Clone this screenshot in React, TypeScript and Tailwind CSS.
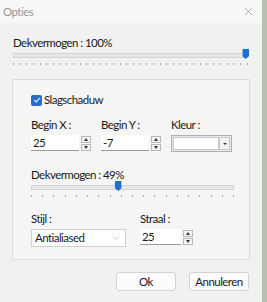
import { ChevronDown, X } from "lucide-react";

function Spinner() {
  return (
    <div className="flex w-[10px] flex-col gap-[1px]">
      <div className="flex h-[7px] items-center justify-center border border-[#b9b9b9] bg-[#f4f4f4]">
        <div className="h-0 w-0 border-x-[2.5px] border-b-[3px] border-x-transparent border-b-[#333]" />
      </div>
      <div className="flex h-[7px] items-center justify-center border border-[#b9b9b9] bg-[#f4f4f4]">
        <div className="h-0 w-0 border-x-[2.5px] border-t-[3px] border-x-transparent border-t-[#333]" />
      </div>
    </div>
  );
}

function NumberField({ value, width }: { value: string; width: string }) {
  return (
    <div className={`flex items-center gap-[2px] ${width}`}>
      <div className="flex h-[16px] flex-1 items-center border-b border-[#9a9a9a] bg-white pl-[2px] text-[#1a1a1a]">
        {value}
      </div>
      <Spinner />
    </div>
  );
}

function Slider({ percent, ticks }: { percent: number; ticks: number }) {
  return (
    <div className="relative">
      <div className="h-[5px] border border-[#d4d4d4] bg-[#e7e7e7]" />
      <div
        className="absolute top-[-4px] h-[10px] w-[7px] -translate-x-1/2 bg-[#1f6fd0] [clip-path:polygon(0_0,100%_0,100%_70%,50%_100%,0_70%)]"
        style={{ left: `${percent}%` }}
      />
      <div className="mt-[5px] flex justify-between">
        {Array.from({ length: ticks }).map((_, i) => (
          <div key={i} className="h-[2px] w-[1px] bg-[#a8a8a8]" />
        ))}
      </div>
    </div>
  );
}

export default function App() {
  return (
    <div className="flex h-[302px] w-[267px] bg-[#b9bfae] font-['Lato',sans-serif] text-[11.5px] leading-[14px] tracking-[-0.55px] text-[#1a1a1a]">
      <div className="flex w-[262px] flex-col bg-[#f1f1f1]">
        <div className="flex h-[23px] items-center justify-between bg-[#f7f7f7] pl-[3px] pr-[7px]">
          <span className="text-[#9a9a9a]">Opties</span>
          <X size={13} strokeWidth={1} className="text-[#777]" />
        </div>

        <div className="flex flex-col px-[13px] pt-[13px]">
          <span>Dekvermogen : 100%</span>
          <div className="mt-[3px] mr-[1px]">
            <Slider percent={99} ticks={36} />
          </div>

          <div className="mt-[14px] -ml-[1px] flex h-[181px] w-[238px] flex-col border border-[#dcdcdc] bg-[#f5f5f5] pl-[18px] pr-[16px] pt-[13px]">
            <div className="flex items-center gap-[2px]">
              <div className="flex h-[11px] w-[11px] items-center justify-center rounded-[2px] bg-[#2a6ccc]">
                <svg width="8" height="8" viewBox="0 0 8 8">
                  <path d="M1.3 4.2 L3.2 6 L6.8 1.8" fill="none" stroke="white" strokeWidth="1.1" />
                </svg>
              </div>
              <span>Slagschaduw</span>
            </div>

            <div className="mt-[11px] flex">
              <div className="flex w-[70px] flex-col gap-[3px]">
                <span>Begin X :</span>
                <NumberField value="25" width="w-[60px]" />
              </div>
              <div className="flex w-[70px] flex-col gap-[3px]">
                <span>Begin Y :</span>
                <NumberField value="-7" width="w-[60px]" />
              </div>
              <div className="flex flex-col gap-[3px]">
                <span>Kleur :</span>
                <div className="flex h-[17px] w-[61px] items-center border border-[#b0b0b0] bg-[#e9e9e9] p-[1px]">
                  <div className="h-full flex-1 border border-[#c8c8c8] bg-white" />
                  <div className="flex h-full w-[11px] items-center justify-center border border-[#c8c8c8] bg-[#f4f4f4]">
                    <div className="h-0 w-0 border-x-[2px] border-t-[2.5px] border-x-transparent border-t-[#333]" />
                  </div>
                </div>
              </div>
            </div>

            <span className="mt-[16px]">Dekvermogen : 49%</span>
            <div className="mt-[3px] w-[203px]">
              <Slider percent={43} ticks={19} />
            </div>

            <div className="mt-[15px] flex">
              <div className="flex w-[109px] flex-col gap-[3px]">
                <span>Stijl :</span>
                <div className="flex h-[18px] w-[95px] items-center justify-between border border-[#d0d0d0] bg-white pl-[3px] pr-[4px]">
                  <span>Antialiased</span>
                  <ChevronDown size={10} strokeWidth={1.2} className="text-[#888]" />
                </div>
              </div>
              <div className="flex flex-col gap-[3px]">
                <span>Straal :</span>
                <NumberField value="25" width="w-[53px]" />
              </div>
            </div>
          </div>

          <div className="mt-[12px] flex justify-end gap-[13px]">
            <button className="h-[19px] w-[60px] rounded-[3px] border border-[#d3d3d3] bg-[#fbfbfb]">
              Ok
            </button>
            <button className="h-[19px] w-[60px] rounded-[3px] border border-[#d3d3d3] bg-[#fbfbfb]">
              Annuleren
            </button>
          </div>
        </div>
      </div>
    </div>
  );
}
